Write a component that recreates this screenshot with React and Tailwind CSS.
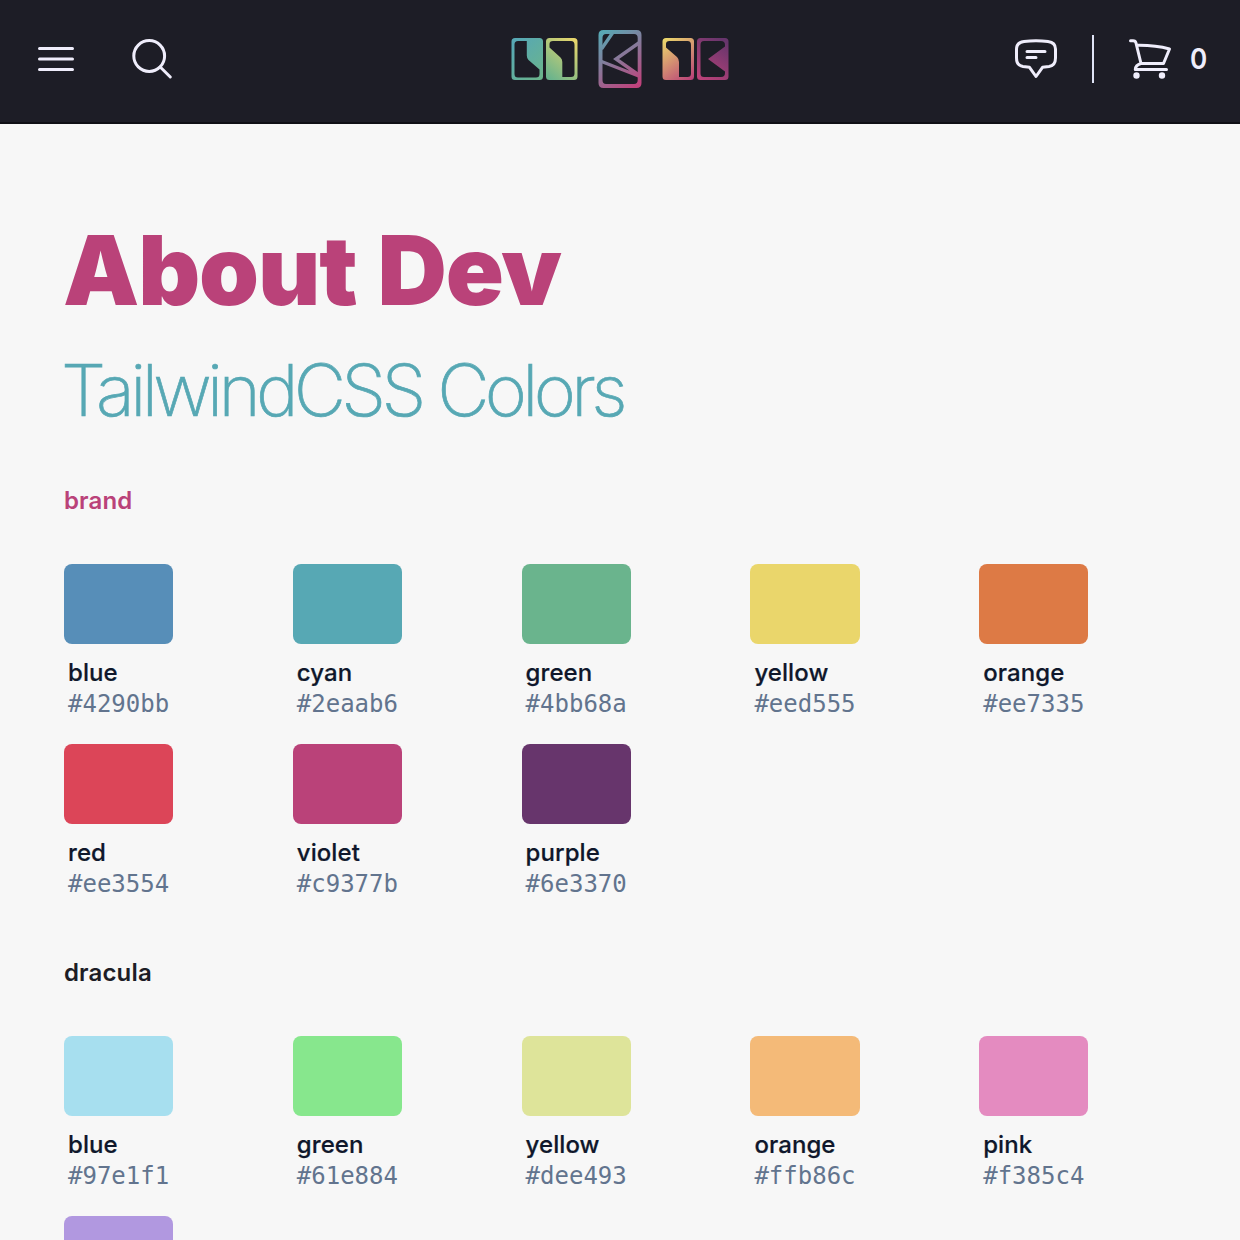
const brand = [
  ["blue", "#4290bb", "bg-[#578eb8]"],
  ["cyan", "#2eaab6", "bg-[#57a8b4]"],
  ["green", "#4bb68a", "bg-[#6ab48d]"],
  ["yellow", "#eed555", "bg-[#ead66b]"],
  ["orange", "#ee7335", "bg-[#dd7a45]"],
  ["red", "#ee3554", "bg-[#dc4558]"],
  ["violet", "#c9377b", "bg-[#ba4279]"],
  ["purple", "#6e3370", "bg-[#67356c]"],
];

const dracula = [
  ["blue", "#97e1f1", "bg-[#a7dfef]"],
  ["green", "#61e884", "bg-[#87e78d]"],
  ["yellow", "#dee493", "bg-[#dee49a]"],
  ["orange", "#ffb86c", "bg-[#f4ba78]"],
  ["pink", "#f385c4", "bg-[#e48bc0]"],
  ["purple", "#af98e6", "bg-[#b198e0]"],
];

function Palette({ name, color, items, className }) {
  return (
    <section className={className}>
      <h3 className={`h-8 text-[24px] leading-[34px] font-semibold tracking-[0.006em] ${color}`}>{name}</h3>
      <div className="mt-12 grid grid-cols-5 gap-x-8 gap-y-6">
        {items.map(([label, hex, bg]) => (
          <div key={label} className="flex w-fit flex-col">
            <div className={`h-20 rounded-lg ${bg}`} />
            <div className="mt-3 h-16 px-1 text-[24px]">
              <div className="h-8 leading-[34px] font-medium tracking-[0.003em] text-slate-900 [-webkit-text-stroke:0.2px]">{label}</div>
              <div className="h-8 font-['DejaVu_Sans_Mono',monospace] leading-8 text-slate-500">{hex}</div>
            </div>
          </div>
        ))}
      </div>
    </section>
  );
}

function Logo() {
  return (
    <svg width="220" height="60" viewBox="510 29 220 60" fill="none" role="img" aria-label="logo">
      <defs>
        <linearGradient id="g1" gradientUnits="userSpaceOnUse" x1="512" y1="45" x2="542" y2="76">
          <stop stopColor="#57a8b4" />
          <stop offset="1" stopColor="#6ab48d" />
        </linearGradient>
        <linearGradient id="g2" gradientUnits="userSpaceOnUse" x1="547" y1="76" x2="577" y2="40">
          <stop stopColor="#6ab48d" />
          <stop offset="1" stopColor="#ead66b" />
        </linearGradient>
        <linearGradient id="g3" gradientUnits="userSpaceOnUse" x1="602" y1="32" x2="638" y2="86">
          <stop stopColor="#57a8b4" />
          <stop offset="1" stopColor="#c0417b" />
        </linearGradient>
        <linearGradient id="g4" gradientUnits="userSpaceOnUse" x1="664" y1="40" x2="692" y2="79">
          <stop stopColor="#ead66b" />
          <stop offset="1" stopColor="#ba4279" />
        </linearGradient>
        <linearGradient id="g5" gradientUnits="userSpaceOnUse" x1="700" y1="78" x2="726" y2="42">
          <stop stopColor="#ba4279" />
          <stop offset="1" stopColor="#67356c" />
        </linearGradient>
      </defs>
      <path fillRule="evenodd" fill="url(#g1)" d="M515 38H539.500Q543 38 543 41.500V76.500Q543 80 539.500 80H515Q511.500 80 511.500 76.500V41.500Q511.500 38 515 38ZM518 41Q514.500 41 514.500 44.500V74Q514.500 77.500 518 77.500H536Q539.500 77.500 539.500 74V69.500L528.500 60Q526.800 58.300 526.800 55.500V41Z" />
      <path fillRule="evenodd" fill="url(#g2)" d="M549.500 38H574Q577.500 38 577.500 41.500V76.500Q577.500 80 574 80H549.500Q546 80 546 76.500V41.500Q546 38 549.500 38ZM553 41Q549.500 41 549.500 44V47.500L560.500 57.500Q562.300 59.200 562.300 62V77H571Q574.500 77 574.500 73.500V45Q574.500 41 571 41Z" />
      <path fillRule="evenodd" fill="url(#g3)" d="M603.500 30H636.500Q641.500 30 641.500 35V83Q641.500 88 636.500 88H603.500Q598.500 88 598.500 83V35Q598.500 30 603.500 30ZM606 34Q602.500 34 602.500 38V80Q602.500 84 606 84H634Q637.700 84 637.700 80V38Q637.700 34 634 34Z" />
      <path d="M601.500 49L612.500 33M601.500 61.500L640 76.500M639.500 42.500L616 59L639.500 75.500" stroke="url(#g3)" strokeWidth="3.400" />
      <path fillRule="evenodd" fill="url(#g4)" d="M666 38H690.500Q694 38 694 41.500V76.500Q694 80 690.500 80H666Q662.500 80 662.500 76.500V41.500Q662.500 38 666 38ZM669.500 41Q666 41 666 44V47.500L677 57Q679 59 679 62V77H687.500Q691 77 691 73.500V45Q691 41 687.500 41Z" />
      <path fillRule="evenodd" fill="url(#g5)" d="M700.500 38H725Q728.500 38 728.500 41.500V76.500Q728.500 80 725 80H700.500Q697 80 697 76.500V41.500Q697 38 700.500 38ZM704 41Q700.500 41 700.500 45V73.500Q700.500 77 704 77H721Q725 77 725 73V71.500L708 59L725 46.500V45Q725 41 721 41Z" />
    </svg>
  );
}

export default function App() {
  return (
    <div className="h-[1240px] overflow-hidden bg-[#f7f7f7] font-['Inter',sans-serif]">
      <header className="h-[124px] border-b-2 border-[#101015] bg-[#1d1d26] text-[#efedfb]">
        <div className="grid w-full grid-cols-3 pt-[29px]">
          <div className="flex items-center gap-[54px] pl-9">
            <svg width="40" height="60" viewBox="36 29 40 60" stroke="currentColor" strokeWidth="3" strokeLinecap="round">
              <path d="M39.500 48.500H72.500M39.500 59H72.500M39.500 69.500H72.500" />
            </svg>
            <svg width="44" height="60" viewBox="130 29 44 60" fill="none" stroke="currentColor" strokeWidth="3" strokeLinecap="round">
              <circle cx="149.200" cy="56" r="15.400" />
              <path d="M160.200 67L170.300 77" />
            </svg>
          </div>
          <div className="flex justify-center">
            <Logo />
          </div>
          <div className="flex items-center justify-end pr-8">
            <svg width="44" height="60" viewBox="1014 29 44 60" fill="none" stroke="currentColor" strokeWidth="3" strokeLinecap="round" strokeLinejoin="round">
              <path d="M1024 41.500Q1036 40 1048 41.500Q1055.500 42.500 1055.500 49V58Q1055.500 65.500 1049 66.500L1042.500 67.300L1036 76.500L1029.500 67.300L1023 66.500Q1016.500 65.500 1016.500 58V49Q1016.500 42.500 1024 41.500Z" />
              <path d="M1027 51.500H1045M1027 57.600H1036" />
            </svg>
            <div className="ml-[34px] h-12 w-[2px] bg-[#dfe3f5]" />
            <svg className="ml-[34px]" width="44" height="60" viewBox="1128 29 44 60" fill="none" stroke="currentColor" strokeWidth="3" strokeLinecap="round" strokeLinejoin="round">
              <path d="M1130.500 40.800H1133Q1135.500 40.800 1136 43L1141 63.500M1136.800 45.300Q1155 45 1169.500 49L1163.500 63.500H1141Q1135.500 65 1135.300 69.500H1166.500" />
              <circle cx="1136.500" cy="75.500" r="1.700" fill="currentColor" />
              <circle cx="1162" cy="75.500" r="1.700" fill="currentColor" />
            </svg>
            <span className="ml-[17px] w-[19px] scale-x-90 text-[29px] leading-[60px] font-semibold">0</span>
          </div>
        </div>
      </header>
      <main className="px-16 pt-[98px]">
        <h1 className="-ml-px h-24 text-[96px] leading-24 font-black tracking-[-0.0115em] [word-spacing:3px] text-[#ba4279]">About Dev</h1>
        <h2 className="mt-9 -ml-[3px] h-[72px] text-[72px] leading-[72px] font-extralight tracking-[-0.065em] text-[#57a8b4] [-webkit-text-stroke:0.7px]">TailwindCSS Colors</h2>
        <Palette className="mt-[58px]" name="brand" color="text-[#ba4279]" items={brand} />
        <Palette className="mt-14" name="dracula" color="text-[#1d1d26]" items={dracula} />
      </main>
    </div>
  );
}
